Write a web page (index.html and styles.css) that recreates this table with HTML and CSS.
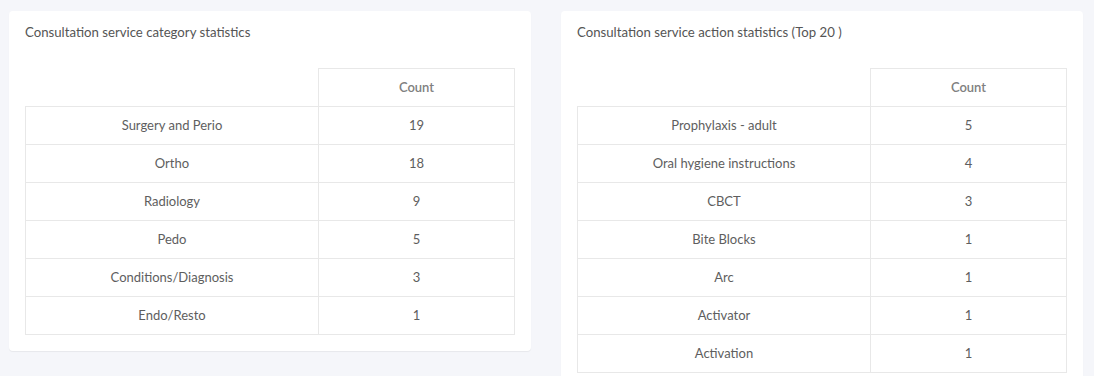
FILE: index.html
```html
<!DOCTYPE html>
<html>
<head>
<meta charset="utf-8">
<link rel="stylesheet" href="styles.css">
</head>
<body>
<div class="page">
  <section class="card">
    <h3 class="card-title">Consultation service category statistics</h3>
    <table class="stats">
      <thead><tr><th class="blank"></th><th>Count</th></tr></thead>
      <tbody>
        <tr><td>Surgery and Perio</td><td>19</td></tr>
        <tr><td>Ortho</td><td>18</td></tr>
        <tr><td>Radiology</td><td>9</td></tr>
        <tr><td>Pedo</td><td>5</td></tr>
        <tr><td>Conditions/Diagnosis</td><td>3</td></tr>
        <tr><td>Endo/Resto</td><td>1</td></tr>
      </tbody>
    </table>
  </section>
  <section class="card">
    <h3 class="card-title">Consultation service action statistics (Top 20 )</h3>
    <table class="stats">
      <thead><tr><th class="blank"></th><th>Count</th></tr></thead>
      <tbody>
        <tr><td>Prophylaxis - adult</td><td>5</td></tr>
        <tr><td>Oral hygiene instructions</td><td>4</td></tr>
        <tr><td>CBCT</td><td>3</td></tr>
        <tr><td>Bite Blocks</td><td>1</td></tr>
        <tr><td>Arc</td><td>1</td></tr>
        <tr><td>Activator</td><td>1</td></tr>
        <tr><td>Activation</td><td>1</td></tr>
      </tbody>
    </table>
  </section>
</div>
</body>
</html>
```
FILE: styles.css
```css
html, body {
  margin: 0;
  padding: 0;
  background: #f5f6fa;
  font-family: "Lato", "Noto Sans", sans-serif;
  overflow: hidden;
}
.page {
  display: grid;
  grid-template-columns: 522px 522px;
  column-gap: 30px;
  align-items: start;
  padding: 11px 11px 0 9px;
}
.card {
  background: #fff;
  border-radius: 4px;
  box-shadow: 0 1px 1px rgba(0,0,0,0.06);
  padding: 16px;
}
.card-title {
  margin: 0;
  font-size: 13.2px;
  font-weight: 400;
  color: #555;
  height: 41px;
  line-height: 10px;
}
.stats {
  width: 490px;
  border-collapse: collapse;
  font-size: 13px;
  color: #5e5e5e;
}
.stats th, .stats td {
  height: 38px;
  box-sizing: border-box;
  padding: 0 0 1px 0;
  text-align: center;
  border: 1px solid #e8e8e8;
}
.stats th {
  font-weight: 600;
  color: #808080;
}
.stats th.blank {
  border-top: none;
  border-left: none;
  width: 293px;
}
```
